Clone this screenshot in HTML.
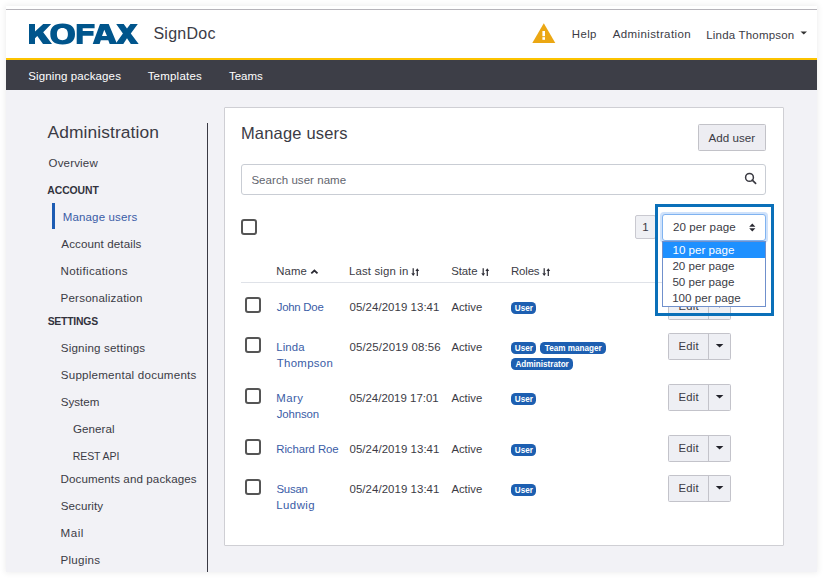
<!DOCTYPE html>
<html><head><meta charset="utf-8"><style>
html,body{margin:0;padding:0;}
body{width:823px;height:578px;position:relative;overflow:hidden;background:#fff;font-family:"Liberation Sans",sans-serif;}
body>div{position:absolute;}
.t{white-space:nowrap;line-height:20px;}
.badge{height:12px;border-radius:4.5px;background:#1d5fb1;color:#fff;font-weight:700;font-size:9.8px;line-height:12px;display:flex;justify-content:center;white-space:nowrap;}
.badge span{display:inline-block;transform:scaleX(0.83);transform-origin:50% 50%;}
</style></head><body>
<div style="left:6px;top:6px;width:811px;height:566px;background:#f2f2f6;box-shadow:0 0 6px 1px rgba(0,0,0,0.07);"></div>
<div style="left:6px;top:6px;width:811px;height:52px;background:#fff;"></div>
<div style="left:6px;top:9px;width:811px;height:1px;background:#b6b4ba;"></div>
<div style="left:6px;top:58px;width:811px;height:2px;background:#fcc300;"></div>
<div style="left:6px;top:60px;width:811px;height:30px;background:#3d3e47;"></div>
<svg style="position:absolute;left:0;top:0" width="823" height="60" viewBox="0 0 823 60">
<g fill="#00558c">
<path d="M29 24H35V31.5L43.2 24H51.2L43.2 32.2L52 44H43L37.3 36L35 38.3V44H29Z"/>
<path fill-rule="evenodd" d="M62.6 23.5C71.2 23.5 75 27.2 75 34C75 40.8 71.2 44.4 62.6 44.4C54 44.4 50.3 40.8 50.3 34C50.3 27.2 54 23.5 62.6 23.5ZM62.4 27.9C58.7 27.9 56.9 30 56.9 34.1C56.9 38.2 58.7 40.3 62.4 40.3C66.1 40.3 67.9 38.2 67.9 34.1C67.9 30 66.1 27.9 62.4 27.9Z"/>
<path d="M76.7 24H94.6V28.2H82.7V30.9H93.5V35.7H82.7V44H76.7Z"/>
<path fill-rule="evenodd" d="M100 24H108.7L117.1 44H109.7L108.3 40.3H100.8L99.6 44H92.7ZM104.3 29.7L102 36.1H107Z"/>
<path d="M116.2 24H123.7L127 28.4L130.4 24H137.8L130.8 33.6L138.7 44H130.8L127 38.2L123.3 44H115.4L122.9 33.6Z"/>
</g>
<path d="M543.8 23.3L555.3 43.1H532.3Z" fill="#eba713"/>
<rect x="542.4" y="31" width="2.6" height="5.2" fill="#fff"/>
<rect x="542.4" y="37.2" width="2.6" height="2.6" fill="#fff"/>
<path d="M800.5 31.5H807L803.75 34.5Z" fill="#333"/>
</svg>
<div class="t" style="left:153.45px;top:24px;font-size:16px;color:#3c3c46;letter-spacing:0.258px;">SignDoc</div>
<div class="t" style="left:571.85px;top:24px;font-size:11.4px;color:#3b3b45;letter-spacing:0.383px;">Help</div>
<div class="t" style="left:612.70px;top:24px;font-size:11.5px;color:#3b3b45;letter-spacing:0.388px;">Administration</div>
<div class="t" style="left:706.25px;top:25px;font-size:11.5px;color:#3b3b45;letter-spacing:0.196px;">Linda Thompson</div>
<div class="t" style="left:28.20px;top:66px;font-size:11.5px;color:#fff;letter-spacing:0.127px;">Signing packages</div>
<div class="t" style="left:147.65px;top:66px;font-size:11.5px;color:#fff;letter-spacing:0.212px;">Templates</div>
<div class="t" style="left:229.05px;top:66px;font-size:11.5px;color:#fff;letter-spacing:-0.038px;">Teams</div>
<div class="t" style="left:47.50px;top:122px;font-size:17.4px;color:#3b3b45;letter-spacing:0.096px;">Administration</div>
<div class="t" style="left:48.50px;top:153px;font-size:11.5px;color:#3b3b45;letter-spacing:0.186px;">Overview</div>
<div class="t" style="left:47.35px;top:181px;font-size:10.4px;color:#33333d;letter-spacing:-0.092px;font-weight:700;">ACCOUNT</div>
<div style="left:52px;top:203px;width:3px;height:26px;background:#1d5cb3;"></div>
<div class="t" style="left:62.75px;top:207px;font-size:11.5px;color:#3a5ca6;letter-spacing:0.150px;">Manage users</div>
<div class="t" style="left:61.30px;top:234px;font-size:11.6px;color:#3b3b45;letter-spacing:0.104px;">Account details</div>
<div class="t" style="left:60.55px;top:261px;font-size:11.6px;color:#3b3b45;letter-spacing:0.321px;">Notifications</div>
<div class="t" style="left:60.55px;top:288px;font-size:11.6px;color:#3b3b45;letter-spacing:0.186px;">Personalization</div>
<div class="t" style="left:60.80px;top:338px;font-size:11.6px;color:#3b3b45;letter-spacing:0.167px;">Signing settings</div>
<div class="t" style="left:60.80px;top:365px;font-size:11.6px;color:#3b3b45;letter-spacing:0.224px;">Supplemental documents</div>
<div class="t" style="left:60.70px;top:392px;font-size:11.6px;color:#3b3b45;letter-spacing:0.020px;">System</div>
<div class="t" style="left:72.90px;top:419px;font-size:11.6px;color:#3b3b45;letter-spacing:0.058px;">General</div>
<div class="t" style="left:72.65px;top:446px;font-size:10.5px;color:#3b3b45;letter-spacing:-0.050px;">REST API</div>
<div class="t" style="left:60.55px;top:469px;font-size:11.6px;color:#3b3b45;letter-spacing:0.095px;">Documents and packages</div>
<div class="t" style="left:60.70px;top:496px;font-size:11.6px;color:#3b3b45;letter-spacing:0.079px;">Security</div>
<div class="t" style="left:60.45px;top:523px;font-size:11.6px;color:#3b3b45;letter-spacing:0.567px;">Mail</div>
<div class="t" style="left:60.45px;top:550px;font-size:11.6px;color:#3b3b45;letter-spacing:0.250px;">Plugins</div>
<div class="t" style="left:47.65px;top:312px;font-size:10.4px;color:#33333d;letter-spacing:-0.214px;font-weight:700;">SETTINGS</div>
<div style="left:207px;top:123px;width:1px;height:449px;background:#3a3a44;"></div>
<div style="left:224px;top:107px;width:560px;height:439px;background:#fff;border:1px solid #cfcfd4;box-sizing:border-box;border-radius:1px;"></div>
<div class="t" style="left:240.95px;top:123px;font-size:16.5px;color:#3b3b45;letter-spacing:0.186px;">Manage users</div>
<div style="left:698px;top:124px;width:68px;height:27px;background:#ededf2;border:1px solid #c2c2c8;box-sizing:border-box;border-radius:1.5px;"></div>
<div class="t" style="left:708.60px;top:128px;font-size:11.6px;color:#3b3b45;letter-spacing:0.014px;">Add user</div>
<div style="left:241px;top:164px;width:525px;height:31px;background:#fff;border:1px solid #c9cdd4;box-sizing:border-box;border-radius:3px;"></div>
<div class="t" style="left:251.40px;top:170px;font-size:11.5px;color:#62656e;letter-spacing:0.053px;">Search user name</div>
<svg style="position:absolute;left:740px;top:168px" width="20" height="20" viewBox="740 168 20 20">
<circle cx="749.5" cy="177.4" r="3.9" fill="none" stroke="#3a3a42" stroke-width="1.5"/>
<path d="M752.3 180.2L755.6 183.3" stroke="#3a3a42" stroke-width="1.7" stroke-linecap="round"/>
</svg>
<div style="left:241px;top:219px;width:16px;height:16px;border:2px solid #555;box-sizing:border-box;border-radius:3px;background:#fff;"></div>
<div class="t" style="left:276.15px;top:261px;font-size:11.3px;color:#3b3b45;letter-spacing:0.200px;">Name</div>
<div class="t" style="left:349.05px;top:261px;font-size:11.4px;color:#3b3b45;letter-spacing:0.141px;">Last sign in</div>
<div class="t" style="left:451.20px;top:261px;font-size:11.4px;color:#3b3b45;letter-spacing:-0.062px;">State</div>
<div class="t" style="left:510.95px;top:261px;font-size:11.4px;color:#3b3b45;letter-spacing:-0.125px;">Roles</div>
<svg style="position:absolute;left:411px;top:268px" width="9" height="9" viewBox="0 0 9 9">
<path d="M2.2 0.3V5.6" stroke="#2a2a33" stroke-width="1.2"/><path d="M0.3 5.2H4.1L2.2 7.9Z" fill="#2a2a33"/>
<path d="M6.3 7.9V2.6" stroke="#2a2a33" stroke-width="1.2"/><path d="M4.4 3H8.2L6.3 0.3Z" fill="#2a2a33"/>
</svg>
<svg style="position:absolute;left:481px;top:268px" width="9" height="9" viewBox="0 0 9 9">
<path d="M2.2 0.3V5.6" stroke="#2a2a33" stroke-width="1.2"/><path d="M0.3 5.2H4.1L2.2 7.9Z" fill="#2a2a33"/>
<path d="M6.3 7.9V2.6" stroke="#2a2a33" stroke-width="1.2"/><path d="M4.4 3H8.2L6.3 0.3Z" fill="#2a2a33"/>
</svg>
<svg style="position:absolute;left:542px;top:268px" width="9" height="9" viewBox="0 0 9 9">
<path d="M2.2 0.3V5.6" stroke="#2a2a33" stroke-width="1.2"/><path d="M0.3 5.2H4.1L2.2 7.9Z" fill="#2a2a33"/>
<path d="M6.3 7.9V2.6" stroke="#2a2a33" stroke-width="1.2"/><path d="M4.4 3H8.2L6.3 0.3Z" fill="#2a2a33"/>
</svg>
<svg style="position:absolute;left:310px;top:268px" width="10" height="8" viewBox="0 0 10 8">
<path d="M1.3 5.4L4.4 2.5L7.5 5.4" fill="none" stroke="#2a2a33" stroke-width="1.8"/>
</svg>
<div style="left:241px;top:282px;width:524px;height:1px;background:#dfe2e8;"></div>
<div style="left:245px;top:297px;width:16px;height:16px;border:2px solid #555;box-sizing:border-box;border-radius:3px;background:#fff;"></div>
<div class="t" style="left:276.75px;top:297px;font-size:11.4px;color:#3a5ca6;letter-spacing:-0.250px;">John Doe</div>
<div class="t" style="left:349.55px;top:297px;font-size:11.45px;color:#3b3b45;letter-spacing:0.053px;">05/24/2019 13:41</div>
<div class="t" style="left:451.40px;top:297px;font-size:11.3px;color:#3b3b45;letter-spacing:0.020px;">Active</div>
<div class="badge" style="left:511px;top:302px;width:25px;"><span>User</span></div>
<div style="left:668px;top:293px;width:63px;height:27px;background:#eeeff4;border:1px solid #c3c3ca;box-sizing:border-box;border-radius:1.5px;"></div>
<div style="left:708px;top:293px;width:1px;height:27px;background:#c3c3ca;"></div>
<div class="t" style="left:678.55px;top:296px;font-size:11.3px;color:#3b3b45;letter-spacing:0.217px;">Edit</div>
<svg style="position:absolute;left:714px;top:303px" width="12" height="6" viewBox="0 0 12 6"><path d="M1.8 1H9.4L5.6 4.4Z" fill="#22222a"/></svg>
<div style="left:245px;top:337px;width:16px;height:16px;border:2px solid #555;box-sizing:border-box;border-radius:3px;background:#fff;"></div>
<div class="t" style="left:276.25px;top:337px;font-size:11.4px;color:#3a5ca6;letter-spacing:0.112px;">Linda</div>
<div class="t" style="left:276.75px;top:353px;font-size:11.4px;color:#3a5ca6;letter-spacing:0.329px;">Thompson</div>
<div class="t" style="left:349.55px;top:337px;font-size:11.45px;color:#3b3b45;letter-spacing:0.133px;">05/25/2019 08:56</div>
<div class="t" style="left:451.40px;top:337px;font-size:11.3px;color:#3b3b45;letter-spacing:0.020px;">Active</div>
<div class="badge" style="left:511px;top:342px;width:25px;"><span>User</span></div>
<div class="badge" style="left:540px;top:342px;width:66px;"><span>Team manager</span></div>
<div class="badge" style="left:511px;top:358px;width:62px;"><span>Administrator</span></div>
<div style="left:668px;top:333px;width:63px;height:27px;background:#eeeff4;border:1px solid #c3c3ca;box-sizing:border-box;border-radius:1.5px;"></div>
<div style="left:708px;top:333px;width:1px;height:27px;background:#c3c3ca;"></div>
<div class="t" style="left:678.55px;top:336px;font-size:11.3px;color:#3b3b45;letter-spacing:0.217px;">Edit</div>
<svg style="position:absolute;left:714px;top:343px" width="12" height="6" viewBox="0 0 12 6"><path d="M1.8 1H9.4L5.6 4.4Z" fill="#22222a"/></svg>
<div style="left:245px;top:388px;width:16px;height:16px;border:2px solid #555;box-sizing:border-box;border-radius:3px;background:#fff;"></div>
<div class="t" style="left:276.25px;top:388px;font-size:11.4px;color:#3a5ca6;letter-spacing:0.467px;">Mary</div>
<div class="t" style="left:276.75px;top:404px;font-size:11.4px;color:#3a5ca6;letter-spacing:-0.125px;">Johnson</div>
<div class="t" style="left:349.55px;top:388px;font-size:11.45px;color:#3b3b45;letter-spacing:0.007px;">05/24/2019 17:01</div>
<div class="t" style="left:451.40px;top:388px;font-size:11.3px;color:#3b3b45;letter-spacing:0.020px;">Active</div>
<div class="badge" style="left:511px;top:393px;width:25px;"><span>User</span></div>
<div style="left:668px;top:384px;width:63px;height:27px;background:#eeeff4;border:1px solid #c3c3ca;box-sizing:border-box;border-radius:1.5px;"></div>
<div style="left:708px;top:384px;width:1px;height:27px;background:#c3c3ca;"></div>
<div class="t" style="left:678.55px;top:387px;font-size:11.3px;color:#3b3b45;letter-spacing:0.217px;">Edit</div>
<svg style="position:absolute;left:714px;top:394px" width="12" height="6" viewBox="0 0 12 6"><path d="M1.8 1H9.4L5.6 4.4Z" fill="#22222a"/></svg>
<div style="left:245px;top:439px;width:16px;height:16px;border:2px solid #555;box-sizing:border-box;border-radius:3px;background:#fff;"></div>
<div class="t" style="left:276.25px;top:439px;font-size:11.4px;color:#3a5ca6;letter-spacing:-0.095px;">Richard Roe</div>
<div class="t" style="left:349.55px;top:439px;font-size:11.45px;color:#3b3b45;letter-spacing:0.053px;">05/24/2019 13:41</div>
<div class="t" style="left:451.40px;top:439px;font-size:11.3px;color:#3b3b45;letter-spacing:0.020px;">Active</div>
<div class="badge" style="left:511px;top:444px;width:25px;"><span>User</span></div>
<div style="left:668px;top:435px;width:63px;height:27px;background:#eeeff4;border:1px solid #c3c3ca;box-sizing:border-box;border-radius:1.5px;"></div>
<div style="left:708px;top:435px;width:1px;height:27px;background:#c3c3ca;"></div>
<div class="t" style="left:678.55px;top:438px;font-size:11.3px;color:#3b3b45;letter-spacing:0.217px;">Edit</div>
<svg style="position:absolute;left:714px;top:445px" width="12" height="6" viewBox="0 0 12 6"><path d="M1.8 1H9.4L5.6 4.4Z" fill="#22222a"/></svg>
<div style="left:245px;top:479px;width:16px;height:16px;border:2px solid #555;box-sizing:border-box;border-radius:3px;background:#fff;"></div>
<div class="t" style="left:276.50px;top:479px;font-size:11.4px;color:#3a5ca6;letter-spacing:-0.237px;">Susan</div>
<div class="t" style="left:276.25px;top:495px;font-size:11.4px;color:#3a5ca6;letter-spacing:0.470px;">Ludwig</div>
<div class="t" style="left:349.55px;top:479px;font-size:11.45px;color:#3b3b45;letter-spacing:0.053px;">05/24/2019 13:41</div>
<div class="t" style="left:451.40px;top:479px;font-size:11.3px;color:#3b3b45;letter-spacing:0.020px;">Active</div>
<div class="badge" style="left:511px;top:484px;width:25px;"><span>User</span></div>
<div style="left:668px;top:475px;width:63px;height:27px;background:#eeeff4;border:1px solid #c3c3ca;box-sizing:border-box;border-radius:1.5px;"></div>
<div style="left:708px;top:475px;width:1px;height:27px;background:#c3c3ca;"></div>
<div class="t" style="left:678.55px;top:478px;font-size:11.3px;color:#3b3b45;letter-spacing:0.217px;">Edit</div>
<svg style="position:absolute;left:714px;top:485px" width="12" height="6" viewBox="0 0 12 6"><path d="M1.8 1H9.4L5.6 4.4Z" fill="#22222a"/></svg>
<div style="left:635px;top:215px;width:21px;height:24px;background:#eff0f4;border:1px solid #c9c9d0;box-sizing:border-box;border-radius:2px;"></div>
<div class="t" style="left:642.25px;top:217px;font-size:11.5px;color:#3b3b45;">1</div>
<div style="left:660px;top:211.5px;width:108px;height:31px;background:#cfe2fb;border-radius:4px;"></div>
<div style="left:662px;top:214px;width:104px;height:27px;background:#fff;border:1px solid #80b3f0;box-sizing:border-box;border-radius:3px;"></div>
<div class="t" style="left:672.90px;top:217px;font-size:11.6px;color:#3b3b45;letter-spacing:0.090px;">20 per page</div>
<svg style="position:absolute;left:748px;top:222px" width="9" height="11" viewBox="0 0 9 11">
<path d="M1.2 4.8L4.3 1.5L7.4 4.8Z M1.2 6.2L4.3 9.5L7.4 6.2Z" fill="#2a2a33"/>
</svg>
<div style="left:662px;top:241px;width:104px;height:66px;background:#fff;border:1px solid #7090cc;box-sizing:border-box;"></div>
<div style="left:663px;top:242px;width:102px;height:16px;background:#1e90ff;"></div>
<div class="t" style="left:672.45px;top:240px;font-size:11.6px;color:#fff;">10 per page</div>
<div class="t" style="left:672.40px;top:256px;font-size:11.6px;color:#3b3b45;letter-spacing:0.010px;">20 per page</div>
<div class="t" style="left:672.40px;top:272px;font-size:11.6px;color:#3b3b45;letter-spacing:0.010px;">50 per page</div>
<div class="t" style="left:672.15px;top:288px;font-size:11.6px;color:#3b3b45;letter-spacing:0.014px;">100 per page</div>
<div style="left:655px;top:204px;width:119px;height:112px;border:3px solid #0a70b9;box-sizing:border-box;"></div>
</body></html>
